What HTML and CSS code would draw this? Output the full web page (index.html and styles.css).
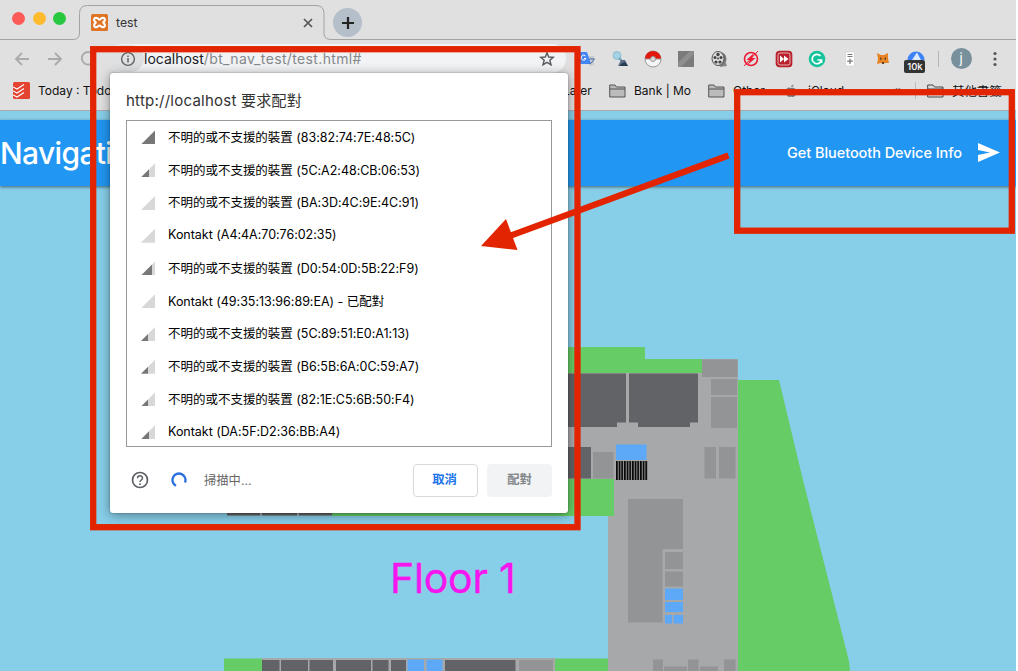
FILE: index.html
```html
<!DOCTYPE html>
<html lang="zh-Hant">
<head>
<meta charset="utf-8">
<title>test</title>
<link rel="stylesheet" href="styles.css">
</head>
<body>
<div class="window">
  <header class="chrome">
    <div class="tabstrip">
      <svg class="tab-outline" width="1016" height="41" viewBox="0 0 1016 41"><path d="M0 39.5H73Q79.500 39.500 79.500 33V13.500Q79.500 5.500 87.500 5.500H316Q324 5.500 324 13.500V33Q324 39.500 331 39.500H1016" fill="none" stroke="#a3a3a3"/></svg>
      <div class="lights"><i class="light red"></i><i class="light amber"></i><i class="light green"></i></div>
      <div class="tab">
        <svg width="17" height="17" viewBox="0 0 17 17"><rect width="17" height="17" rx="1.500" fill="#e07425"/><path d="M6 4C3.500 3.300 2.800 5 3.200 6.500L4.800 8.500L3.200 10.500C2.800 12 3.500 13.700 6 13C7.500 12.500 7.500 11.500 8.500 11.500C9.500 11.500 9.500 12.500 11 13C13.500 13.700 14.200 12 13.800 10.500L12.200 8.500L13.800 6.500C14.200 5 13.500 3.300 11 4C9.500 4.500 9.500 5.500 8.500 5.500C7.500 5.500 7.500 4.500 6 4Z" fill="none" stroke="#fff" stroke-width="2.100" stroke-linejoin="round"/></svg>
        <span class="tab-title">test</span>
        <svg class="tab-close" width="10" height="10" viewBox="0 0 10 10"><path d="M1 1L9 9M9 1L1 9" stroke="#555" stroke-width="1.700"/></svg>
      </div>
      <span class="new-tab"><svg width="14" height="14" viewBox="0 0 14 14"><path d="M7 1V13M1 7H13" stroke="#222" stroke-width="2.200"/></svg></span>
    </div>
    <div class="toolbar">
      <div class="nav">
        <svg width="16" height="14" viewBox="0 0 16 14"><path d="M15 7H2M8 1L2 7L8 13" fill="none" stroke="#aaa" stroke-width="1.800"/></svg>
        <svg width="16" height="14" viewBox="0 0 16 14"><path d="M1 7H14M8 1L14 7L8 13" fill="none" stroke="#aaa" stroke-width="1.800"/></svg>
        <svg width="16" height="16" viewBox="0 0 16 16"><path d="M13.500 4A6.300 6.300 0 1 0 14.200 9M14.500 1V6H10" fill="none" stroke="#aaa" stroke-width="1.800"/></svg>
      </div>
      <div class="omnibox">
        <span class="site-info"><svg width="16" height="16" viewBox="0 0 16 16"><circle cx="8" cy="8" r="6.400" fill="none" stroke="#5f6368" stroke-width="1.400"/><path d="M8 7V11.500M8 4.500V6" stroke="#5f6368" stroke-width="1.500"/></svg></span>
        <span class="url"><b>localhost</b>/bt_nav_test/test.html#</span>
        <svg class="star" width="16" height="16" viewBox="0 0 16 16"><path d="M8 1.800L9.700 6L14.300 6.300L10.800 9.200L12 13.800L8 11.300L4 13.800L5.200 9.200L1.700 6.300L6.300 6Z" fill="none" stroke="#55585c" stroke-width="1.400"/></svg>
      </div>
      <div class="extensions">
        <span><svg width="18" height="18" viewBox="0 0 18 18"><path d="M8 6H16V15L12 16Z" fill="#c6cbd1"/><path d="M1 2H9L13 14H3Q1 14 1 12Z" fill="#4285f4"/><path d="M7.500 6A2.500 2.500 0 1 0 8 8.500H6" fill="none" stroke="#fff"/><path d="M11 9H17M14 8V9M16 9Q15 13 11 14" fill="none" stroke="#5676a6"/></svg></span>
        <span><svg width="18" height="18" viewBox="0 0 18 18"><circle cx="6" cy="5.500" r="4" fill="#a5d2e5" stroke="#8fbdd0"/><path d="M8 8L12 12" stroke="#6a9cb6" stroke-width="2"/><path d="M7 16L10 10L14 10L17 16Z" fill="#596c82"/><path d="M10 14L14 12L17 16H9Z" fill="#263a50"/></svg></span>
        <span><svg width="18" height="18" viewBox="0 0 18 18"><circle cx="9" cy="9" r="8" fill="#f5f5f5" stroke="#999"/><path d="M1 9A8 8 0 0 1 17 9Z" fill="#e3170c"/><path d="M1 9H17" stroke="#999" stroke-width="1"/><circle cx="9" cy="9" r="2.500" fill="#ddd" stroke="#999"/></svg></span>
        <span><svg width="18" height="18" viewBox="0 0 18 18"><path d="M1 1H17V17H1Z" fill="#7b7b7b"/><path d="M1 13L13 1H17V4L4 17H1Z" fill="#8e8e8e"/></svg></span>
        <span><svg width="18" height="18" viewBox="0 0 18 18"><path d="M11 14L16 13L17 16L10 17Z" fill="#888"/><ellipse cx="10" cy="9" rx="6.500" ry="7" fill="#777"/><ellipse cx="8" cy="8.500" rx="6" ry="7" fill="#ddd" stroke="#555"/><g fill="#444"><circle cx="8" cy="4.500" r="1.700"/><circle cx="5" cy="7.500" r="1.500"/><circle cx="11" cy="7.500" r="1.500"/><circle cx="6" cy="12" r="1.600"/><circle cx="10" cy="12" r="1.600"/><circle cx="8" cy="8.500" r="1"/></g></svg></span>
        <span><svg width="18" height="18" viewBox="0 0 18 18"><circle cx="9" cy="9" r="6.500" fill="none" stroke="#ed1c35" stroke-width="1.600"/><path d="M12 3L4.500 10H8L5.500 15L13.500 8H10Z" fill="#ed1c35"/><path d="M2 16L16 1" stroke="#ed1c35"/></svg></span>
        <span><svg width="18" height="18" viewBox="0 0 18 18"><rect x="1.500" y="1.500" width="15" height="15" rx="3" fill="#b9202b" stroke="#b9202b" stroke-width="1.700"/><rect x="3" y="3" width="12" height="12" rx="2" fill="none" stroke="#f0d5d6" stroke-width=".8"/><path d="M5 5.500L9 9L5 12.500ZM9 5.500L13.500 9L9 12.500Z" fill="#fff"/></svg></span>
        <span><svg width="18" height="18" viewBox="0 0 18 18"><circle cx="9" cy="9" r="8.300" fill="#15c39a"/><path d="M12.500 6A4.700 4.700 0 1 0 13.500 10H9.500M13.500 9.500V13" fill="none" stroke="#fff" stroke-width="1.700"/></svg></span>
        <span><svg width="18" height="18" viewBox="0 0 18 18"><rect x="4.500" y="2" width="9" height="14" fill="#fff" stroke="#ccc" stroke-width=".6"/><path d="M6.500 4.500H11.500M6.500 6.500H11.500M9 8.500V14M6.200 11.200H11.800" stroke="#777" stroke-width="1.200"/></svg></span>
        <span><svg width="18" height="18" viewBox="0 0 18 18"><path d="M3 3L7 5H10L14 3L14 8L15 13L11 13L9 14L7 13L3 14L4 9Z" fill="#e88324"/><path d="M6 7L8 9L6 10ZM12 7L10 9L12 10ZM8 12H10V14H8Z" fill="#5f422e"/></svg></span>
        <span class="speed"><svg width="18" height="18" viewBox="0 0 18 18"><path d="M.5 10A8.500 8.500 0 0 1 17.500 10Z" fill="#3d83f5"/><path d="M10 2.500L5 10H14Z" fill="#dcecff"/></svg><em>10k</em></span>
      </div>
      <i class="divider"></i>
      <span class="avatar">j</span>
      <svg class="more" width="6" height="16" viewBox="0 0 6 16"><g fill="#555"><circle cx="3" cy="2.500" r="1.600"/><circle cx="3" cy="8" r="1.600"/><circle cx="3" cy="13.500" r="1.600"/></g></svg>
    </div>
    <div class="bookmarks">
      <svg class="todoist" width="17" height="17" viewBox="0 0 17 17"><rect width="17" height="17" rx="1.500" fill="#e44332"/><path d="M0 5L4 7L11 2.500M0 9L4 11L11 6.500M0 13L4 15L11 10.500" fill="none" stroke="#fff" stroke-width="1.100"/></svg>
      <span class="bm today">Today : Todo</span>
      <span class="bm later">Later</span>
      <svg class="folder" width="17" height="14" viewBox="0 0 17 14"><path d="M.7 13V1H6L7.500 3H16V13ZM1 5H16" fill="#bbb" stroke="#555"/></svg>
      <span class="bm bank">Bank | Mo</span>
      <svg class="folder" width="17" height="14" viewBox="0 0 17 14"><path d="M.7 13V1H6L7.500 3H16V13ZM1 5H16" fill="#bbb" stroke="#555"/></svg>
      <span class="bm other">Other</span>
      <svg class="apple" width="12" height="14" viewBox="0 0 12 14"><path d="M6 4C3 2.500 1 4 1 8C1 11 3 14 6 12.500C8.500 14 10.500 12 11 10C8.500 9 8.500 6 10.500 5C9 3.500 7.500 3.500 6 4ZM6 3Q6 1 8.500 .5Q8.500 3 6 3Z" fill="#777"/></svg>
      <span class="bm icloud">iCloud</span>
      <span class="bm chev">»</span>
      <i class="bm-divider"></i>
      <svg class="folder" width="17" height="14" viewBox="0 0 17 14"><path d="M.7 13V1H6L7.500 3H16V13ZM1 5H16" fill="#ddd" stroke="#444"/></svg>
      <span class="bm all">其他書籤</span>
    </div>
  </header>
  <main class="page">
    <div class="appbar"><h1>Navigation</h1><div class="action"><span>Get Bluetooth Device Info</span><svg width="22" height="19" viewBox="0 0 22 19"><path d="M0 0L22 9.500L0 19V12L12 9.500L0 7Z" fill="#fff"/></svg></div></div>
    <svg class="map" width="1016" height="485" viewBox="0 186 1016 485">
      <defs><pattern id="stairs" x="616" y="461" width="2.670" height="20" patternUnits="userSpaceOnUse"><rect width="2.670" height="20" fill="#999"/><rect width="1.700" height="20" fill="#080808"/></pattern></defs>
      <path d="M540 347H645V359H702V373H540ZM332 479H614V516H332ZM738 380H779L803 480L849 661L850 671H738ZM224 658.500H262V671H224ZM555 658.500H608V671H555Z" fill="#66cc66"/>
      <path d="M540 373H702V359H738V671H608V516H614V479H540ZM262 658H555V671H262ZM227 500H332V515.500H227Z" fill="#a7a8aa"/>
      <path d="M560 373.500H626V422.500H617V427H560ZM629 373.500H698V422.500H690V427H638V422.500H629ZM560 447H591V478.500H560ZM227 500H260V515.500H227ZM262 500H297V515.500H262ZM299 500H332V515.500H299ZM262 660H279.500V671H262ZM281 660H308V671H281ZM309.500 660H333V671H309.500ZM336 660H371V671H336ZM372.500 660H388.500V671H372.500ZM391 660H406V671H391ZM445 660H515.500V671H445Z" fill="#626367"/>
      <path d="M702 359.500H737.500V377H702ZM711 379H737V395H711ZM711 397H737V428H711ZM593 452H613.500V478.500H593ZM704.500 447H716V478.500H704.500ZM719 447H735.500V478.500H719ZM628 499H683V549H662.500V622.500H628ZM665 552H683V569H665ZM665 571.500H683V586.500H665ZM653 659.500H663V671H653ZM664 666.500H687V671H664ZM688 659.500H698.500V671H688ZM700 666.500H718V671H700ZM724 659.500H735.500V671H724ZM519 660H553V671H519Z" fill="#939496"/>
      <path d="M616 444.500H646.500V460H616ZM665 588.500H683V600H665ZM665 602H683V612H665ZM665 615H672V623.500H665ZM673.500 615H683V623.500H673.500ZM407.500 659.500H424V671H407.500ZM426.500 659.500H442.500V671H426.500Z" fill="#5da9f7"/>
      <rect x="616" y="461" width="32" height="19" fill="url(#stairs)"/>
      <text class="floor" x="390" y="592.500">Floor 1</text>
    </svg>
  </main>
  <section class="dialog">
    <h2>http://localhost 要求配對</h2>
    <ul class="devices">
      <li><i class="signal s4"></i><span>不明的或不支援的裝置 (83:82:74:7E:48:5C)</span></li>
      <li><i class="signal s2"></i><span>不明的或不支援的裝置 (5C:A2:48:CB:06:53)</span></li>
      <li><i class="signal"></i><span>不明的或不支援的裝置 (BA:3D:4C:9E:4C:91)</span></li>
      <li><i class="signal"></i><span>Kontakt (A4:4A:70:76:02:35)</span></li>
      <li><i class="signal s3"></i><span>不明的或不支援的裝置 (D0:54:0D:5B:22:F9)</span></li>
      <li><i class="signal"></i><span>Kontakt (49:35:13:96:89:EA) - 已配對</span></li>
      <li><i class="signal s1"></i><span>不明的或不支援的裝置 (5C:89:51:E0:A1:13)</span></li>
      <li><i class="signal s1"></i><span>不明的或不支援的裝置 (B6:5B:6A:0C:59:A7)</span></li>
      <li><i class="signal s1"></i><span>不明的或不支援的裝置 (82:1E:C5:6B:50:F4)</span></li>
      <li><i class="signal s2"></i><span>Kontakt (DA:5F:D2:36:BB:A4)</span></li>
    </ul>
    <footer class="actions">
      <svg class="help" width="18" height="18" viewBox="0 0 18 18"><circle cx="9" cy="9" r="7.500" fill="none" stroke="#5f6368" stroke-width="1.700"/><path d="M6.500 7.300C6.500 4 11.500 4 11.500 7.200C11.500 9 9 9 9 11M9 12.300V14" fill="none" stroke="#5f6368" stroke-width="1.500"/></svg>
      <svg class="spinner" width="16" height="16" viewBox="0 0 16 16"><path d="M5 13.800A6.500 6.500 0 1 1 14 10.500" fill="none" stroke="#2a6fdf" stroke-width="2.300"/></svg>
      <span class="status">掃描中...</span>
      <button class="btn cancel">取消</button>
      <button class="btn pair">配對</button>
    </footer>
  </section>
  <svg class="annotations" width="1016" height="671" viewBox="0 0 1016 671"><g fill="none" stroke="#e32400" stroke-width="6.300"><rect x="93.200" y="49.200" width="484.300" height="478"/><rect x="737.200" y="92.200" width="274.600" height="138.500"/><path d="M728.500 155.500L508 236.500"/></g><path d="M481 246L506 219L517.500 250Z" fill="#e32400"/></svg>
</div>
</body>
</html>
```
FILE: styles.css
```css
* { box-sizing: border-box; }
body { margin: 0; background: #fff; font-family: Inter, "Noto Sans CJK TC", sans-serif; overflow: hidden; }
svg { display: block; flex: none; }
.window { position: relative; width: 1016px; height: 671px; overflow: hidden; display: flex; flex-direction: column; }
.chrome { height: 111px; flex: none; background: #e0e0e0; border-bottom: 1px solid #aaa; }
.tabstrip { position: relative; height: 40px; display: flex; align-items: flex-start; }
.tab-outline { position: absolute; left: 0; top: 0; }
.lights { width: 80px; padding: 12px 0 0 12px; display: flex; gap: 7.5px; }
.light { width: 13px; height: 13px; border-radius: 50%; }
.red { background: #fc5b57; }
.amber { background: #fdbb2d; }
.green { background: #27c840; }
.tab { width: 245px; height: 33px; margin-top: 6px; padding: 0 12px 0 11px; display: flex; align-items: center; }
.tab-title { margin-left: 8px; font-size: 12.3px; color: #333; flex: 1; }
.new-tab { margin: 8px 0 0 8px; width: 29px; height: 29px; border-radius: 50%; background: #b5bfca; display: grid; place-items: center; }
.toolbar { height: 37px; display: flex; align-items: center; }
.nav { width: 109px; padding-left: 14px; display: flex; gap: 17px; align-items: center; flex: none; }
.omnibox { width: 457px; height: 29px; border-radius: 15px; background: #f1f3f4; display: flex; align-items: center; flex: none; padding-right: 11px; }
.site-info { width: 35px; height: 27px; padding-left: 2px; border-radius: 14px; background: #dfe0e1; display: grid; place-items: center; }
.url { flex: 1; font-size: 14px; line-height: 18px; color: #85888b; letter-spacing: .36px; white-space: nowrap; }
.url b { font-weight: 400; color: #202124; letter-spacing: 0; }
.extensions { width: 363px; margin-left: 4.5px; display: flex; flex: none; }
.extensions > span { width: 32.9px; display: grid; place-items: center; }
.extensions .speed { position: relative; }
.speed em { position: absolute; left: 5px; top: 10px; width: 21px; height: 13px; border-radius: 2px; background: #333; color: #fff; font: 500 9.5px/13px Inter, sans-serif; text-align: center; }
.divider { width: 1px; height: 16px; margin-left: 4px; background: #b5b5b5; }
.avatar { width: 21px; height: 21px; margin-left: 12px; border-radius: 50%; background: #78909c; color: #fff; font-size: 13px; line-height: 20px; text-align: center; }
.more { margin-left: 20px; }
.bookmarks { height: 33px; padding: 0 0 6px 13px; display: flex; align-items: center; font-size: 12px; color: #111; white-space: nowrap; }
.bm { flex: none; overflow: hidden; }
.today { margin-left: 8px; width: 90px; }
.later { margin-left: 336px; width: 145px; padding-left: 99px; }
.bank { margin-left: 8px; width: 74px; }
.other { margin-left: 8px; width: 52px; }
.icloud { margin-left: 11px; width: 87px; }
.chev { width: 20px; font-size: 14px; }
.bm-divider { width: 1px; height: 17px; background: #bbb; margin-right: 11px; flex: none; }
.all { margin-left: 8px; font-size: 12.4px; }
.page { background: #87cee8; padding-top: 9px; flex: 1; }
.appbar { position: relative; height: 66px; background: #2196f3; display: flex; align-items: center; justify-content: space-between; padding: 0 16px 1px 0; box-shadow: 0 1px 3px rgba(0,0,0,.5); color: #fff; }
.appbar h1 { margin: 0; font-size: 30px; font-weight: 450; letter-spacing: -.65px; }
.action { display: flex; align-items: center; gap: 16px; font-size: 14.5px; font-weight: 500; letter-spacing: -.06px; }
.floor { font: 41px Inter, sans-serif; letter-spacing: -.2px; fill: #f515ee; stroke: #f515ee; stroke-width: .4px; }
.dialog { position: absolute; left: 110px; top: 73px; width: 458px; height: 440px; padding: 17px 16px; background: #fff; border-radius: 3px; box-shadow: 0 2px 12px rgba(0,0,0,.4), 0 0 2px rgba(0,0,0,.35); }
.dialog h2 { margin: 0; height: 30px; font-size: 15px; line-height: 21px; font-weight: 400; letter-spacing: .24px; color: #333; }
.devices { list-style: none; margin: 0; padding: 0; width: 426px; height: 327px; border: 1px solid #999; overflow: hidden; }
.devices li { height: 32.75px; padding-left: 14px; display: flex; align-items: center; font-size: 12.5px; letter-spacing: -.02px; color: #000; white-space: nowrap; }
.devices span { padding-bottom: 2px; }
.signal { width: 14px; height: 14px; margin-right: 13px; background: #d8d8d8; clip-path: polygon(100% 0, 100% 100%, 0 100%); }
.s1 { background: linear-gradient(90deg, #777 50%, #d8d8d8 50%); }
.s2 { background: linear-gradient(90deg, #777 60%, #d8d8d8 60%); }
.s3 { background: linear-gradient(90deg, #777 75%, #d8d8d8 75%); }
.s4 { background: #777; }
.actions { display: flex; align-items: center; height: 33px; margin-top: 16.5px; padding-left: 5px; }
.spinner { margin-left: 22px; }
.status { flex: 1; margin-left: 17px; font-size: 12.3px; color: #666; }
.btn { width: 65px; height: 33px; padding: 0 2px 2px 0; border: 1px solid #d7d9dd; border-radius: 4px; background: #fff; font: 700 12.3px "Noto Sans CJK TC", sans-serif; }
.cancel { color: #1a73e8; }
.pair { margin-left: 9px; padding-right: 0; color: #85888b; background: #f1f3f4; border-color: #f1f3f4; }
.annotations { position: absolute; left: 0; top: 0; pointer-events: none; }
```
